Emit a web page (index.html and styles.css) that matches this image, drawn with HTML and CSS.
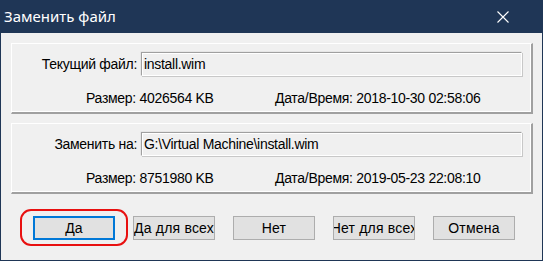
FILE: index.html
```html
<!DOCTYPE html>
<html lang="ru">
<head>
    <meta charset="UTF-8">
    <title>Заменить файл</title>
    <link rel="stylesheet" href="styles.css">
</head>
<body>
    <div class="window">
        <div class="titlebar">
            <span class="title">Заменить файл</span>
            <svg class="close" width="12" height="12" viewBox="0 0 12 12">
                <path d="M0.5 0.5 L11.5 11.5 M11.5 0.5 L0.5 11.5" stroke="#fff" stroke-width="1.1" fill="none"/>
            </svg>
        </div>
        <div class="content">
            <div class="group">
                <div class="file-row">
                    <span class="label">Текущий файл:</span>
                    <div class="field">install.wim</div>
                </div>
                <div class="info-row">
                    <span>Размер: 4026564 KB</span>
                    <span>Дата/Время: 2018-10-30 02:58:06</span>
                </div>
            </div>
            <div class="group">
                <div class="file-row">
                    <span class="label">Заменить на:</span>
                    <div class="field">G:\Virtual Machine\install.wim</div>
                </div>
                <div class="info-row">
                    <span>Размер: 8751980 KB</span>
                    <span>Дата/Время: 2019-05-23 22:08:10</span>
                </div>
            </div>
            <div class="buttons">
                <div class="marked">
                    <button class="btn default">Да</button>
                    <div class="ring"></div>
                </div>
                <button class="btn">Да для всех</button>
                <button class="btn">Нет</button>
                <button class="btn">Нет для всех</button>
                <button class="btn">Отмена</button>
            </div>
        </div>
    </div>
</body>
</html>
```

FILE: styles.css
```css
body {
    margin: 0;
    font-family: "Liberation Sans", Arial, sans-serif;
    font-size: 14px;
    letter-spacing: -0.3px;
    color: #000;
    background: #f0f0f0;
}
.window {
    width: 543px;
    height: 261px;
    box-sizing: border-box;
    border: 1px solid #1f3656;
    border-top: none;
    background: #f0f0f0;
    overflow: hidden;
}
.titlebar {
    height: 33px;
    background: #1f3656;
    display: flex;
    align-items: center;
    justify-content: space-between;
    padding: 0 34px 0 4px;
    margin: 0 -1px;
}
.title {
    font-family: "Noto Sans", sans-serif;
    font-size: 15px;
    letter-spacing: 0;
    color: #fff;
    margin-top: -1px;
}
.close {
    display: block;
}
.content {
    padding: 10px 9px 0 10px;
}

/* Group boxes */
.group {
    height: 71px;
    box-sizing: border-box;
    border-top: 1px solid #fff;
    border-left: 1px solid #fff;
    border-right: 2px solid #a0a0a0;
    border-bottom: 2px solid #a0a0a0;
    box-shadow: inset -1px -1px 0 #fff;
    padding: 8px 9px 0 0;
    margin-bottom: 9px;
}
.file-row {
    display: grid;
    grid-template-columns: 129px 1fr;
    align-items: center;
}
.label {
    text-align: right;
    padding-right: 4px;
}
.field {
    height: 24px;
    box-sizing: border-box;
    border: 1px solid #a0a0a0;
    border-right-color: #fff;
    border-bottom-color: #fff;
    box-shadow: inset 1px 1px 0 #fff, -0.5px -0.5px 0 #dcdcdc, 1px 1px 0 #c8c8c8;
    padding: 0 2px;
    line-height: 22px;
    white-space: nowrap;
    overflow: hidden;
}
.info-row {
    display: grid;
    grid-template-columns: 189px auto;
    padding-left: 74px;
    margin-top: 14px;
    line-height: 16px;
    white-space: nowrap;
}

/* Buttons */
.buttons {
    display: flex;
    gap: 18px;
    padding-left: 22px;
    margin-top: 22px;
}
.btn {
    width: 82px;
    height: 24px;
    box-sizing: border-box;
    background: #e1e1e1;
    border: 1px solid #adadad;
    font-family: "Liberation Sans", Arial, sans-serif;
    font-size: 14px;
    letter-spacing: 0.2px;
    color: #000;
    padding: 0;
    display: flex;
    align-items: center;
    justify-content: center;
    white-space: nowrap;
    overflow: hidden;
}
.btn.default {
    border: 2px solid #0078d7;
}
.marked {
    position: relative;
}
.ring {
    position: absolute;
    left: -13px;
    right: -13px;
    top: -7px;
    bottom: -6px;
    border: 2px solid #e81010;
    border-radius: 11px;
}
```
